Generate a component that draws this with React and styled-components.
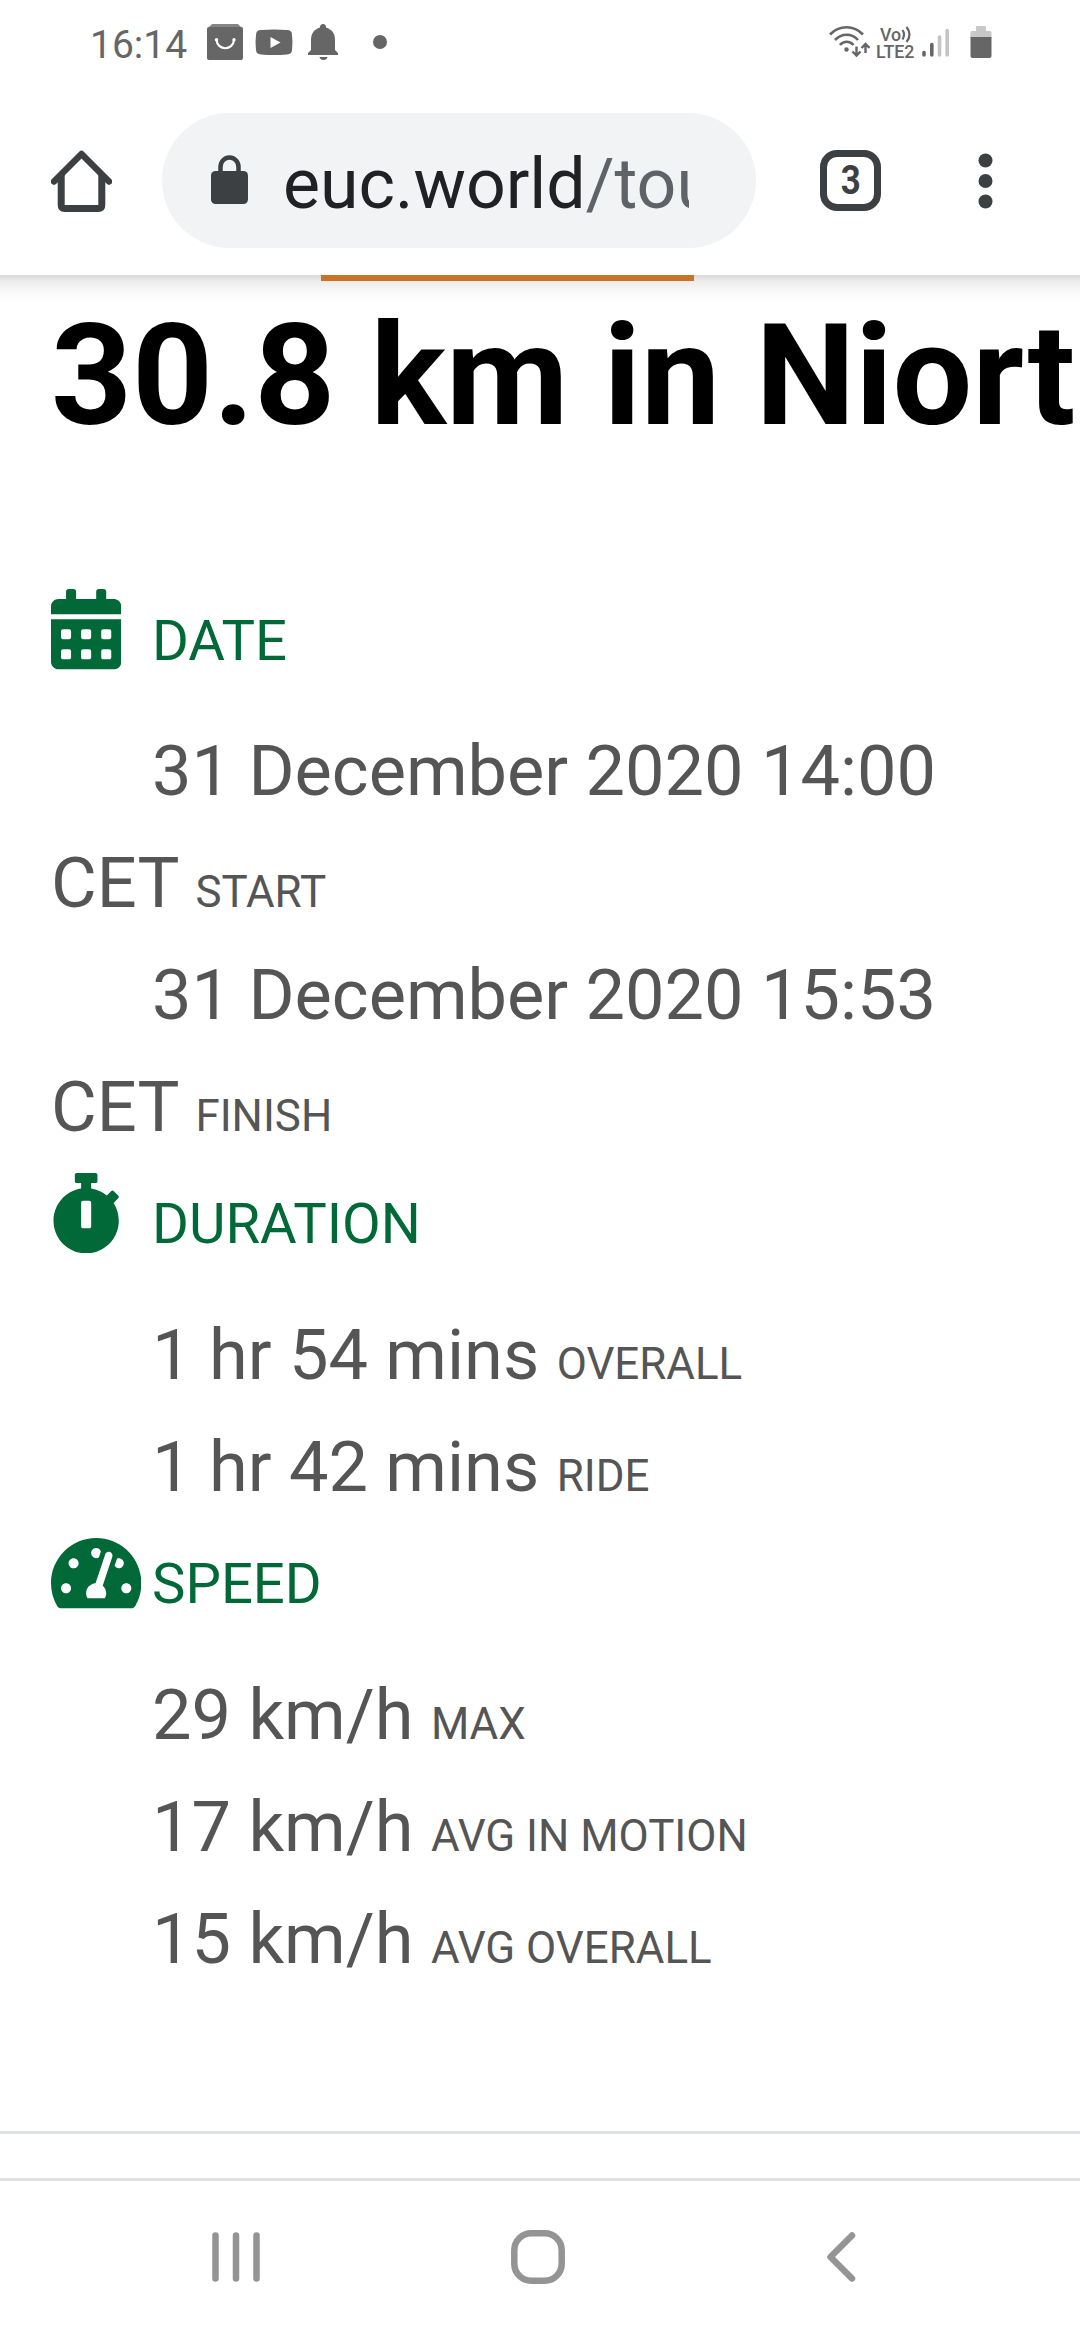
import React from 'react'
import styled, { createGlobalStyle } from 'styled-components'
import { FaCalendarAlt, FaStopwatch, FaTachometerAlt } from 'react-icons/fa'

const GlobalStyle = createGlobalStyle`
  * {
    box-sizing: border-box;
  }

  body {
    margin: 0;
    background: #fff;
    font-family: Roboto, "Liberation Sans", sans-serif;
  }
`

const Screen = styled.div`
  display: flex;
  flex-direction: column;
  width: 1080px;
  height: 2340px;
  overflow: hidden;
  background: #fff;
`

/* status bar */

const StatusBar = styled.div`
  display: flex;
  justify-content: space-between;
  flex: none;
  height: 84px;
  padding: 0 88px 0 90px;
  color: #666;
`

const StatusGroup = styled.div`
  display: flex;
  align-items: center;
`

const Clock = styled.span`
  width: 117px;
  padding-top: 6px;
  font-size: 39px;
  line-height: 44px;
`

const Network = styled.div`
  display: flex;
  flex-direction: column;
  width: 43px;
  margin: 2px 3px 0 6px;
  font-size: 17.8px;
  font-weight: 500;
  line-height: 17px;
`

const NetworkTop = styled.div`
  display: flex;
  padding-left: 4px;
`

/* browser toolbar */

const Toolbar = styled.div`
  display: flex;
  align-items: center;
  flex: none;
  position: relative;
  z-index: 1;
  height: 191px;
  padding: 2px 0 0 51px;
  background: #fff;
`

const ToolbarShadow = styled.div`
  position: absolute;
  top: 191px;
  left: 0;
  width: 1080px;
  height: 26px;
  background: linear-gradient(#d9d9d9, #ececec 25%, #f8f8f8 60%, rgba(255, 255, 255, 0));
`

const LoadingBar = styled.div`
  position: absolute;
  top: 191px;
  left: 321px;
  width: 373px;
  height: 6px;
  background: #c87428;
`

const AddressBar = styled.div`
  display: flex;
  align-items: center;
  width: 594px;
  height: 135px;
  margin: 0 64px 0 50px;
  padding-left: 49px;
  border-radius: 68px;
  background: #f1f3f4;

  svg {
    margin-bottom: 3px;
  }
`

const Url = styled.div`
  width: 406px;
  margin-left: 35px;
  padding-top: 6px;
  overflow: hidden;
  font-size: 69.8px;
  line-height: 90px;
  color: #202124;
  white-space: nowrap;
`

const UrlPath = styled.span`
  color: #5f6368;
`

const TabCount = styled.div`
  display: flex;
  align-items: center;
  justify-content: center;
  width: 61px;
  height: 61px;
  border: 7px solid #3c4043;
  border-radius: 17px;
  font-size: 41px;
  font-weight: 700;
  line-height: 47px;
  color: #3c4043;
`

const TabNumber = styled.span`
  transform: scaleX(0.85);
`

const MenuDots = styled.svg`
  margin-left: 97px;
`

/* page */

const Page = styled.main`
  flex: 1;
  overflow: hidden;
`

const Title = styled.h1`
  margin: 0;
  padding: 17px 0 0 51px;
  font-size: 141.4px;
  font-weight: 700;
  line-height: 169px;
  color: #000;
  white-space: nowrap;
`

const Details = styled.div`
  height: 1551.3px;
  margin-top: 118.7px;
  padding: 0 51px;
`

const SectionHead = styled.h2`
  display: flex;
  align-items: baseline;
  height: 112px;
  margin: 0 0 23.65px;
  font-size: 56.25px;
  font-weight: 400;
  line-height: 122px;
  color: #006937;
`

const IconSlot = styled.span`
  width: 101px;
  flex: none;

  svg {
    width: ${({$iconWidth}) => $iconWidth}px;
    height: 80.4px;
    vertical-align: -10px;
  }
`

const Entry = styled.p`
  margin: 0;
  font-size: 70.3px;
  line-height: 112px;
  text-indent: 101px;
  color: #555;
`

const Caption = styled.small`
  font-size: 43.9px;
  line-height: 1;
`

const Divider = styled.hr`
  height: 3px;
  margin: 0;
  border: 0;
  background: #dee2e6;
`

/* android navigation */

const NavBar = styled.nav`
  display: flex;
  align-items: center;
  flex: none;
  height: 162px;
  padding: 0 0 7px 212px;
  border-top: 3px solid #e0e0e0;
  background: #fff;
`

const NavIcon = styled.svg`
  flex: none;
  margin-right: ${({$gap}) => $gap || 0}px;
  fill: none;
  stroke: #949494;
  stroke-width: 6.5;
  stroke-linecap: round;
`

const sections = [
  {
    name: "DATE",
    icon: <FaCalendarAlt />,
    iconWidth: 70.3,
    entries: [
      ["31 December 2020 14:00 CET", "START"],
      ["31 December 2020 15:53 CET", "FINISH"],
    ],
  },
  {
    name: "DURATION",
    icon: <FaStopwatch />,
    iconWidth: 70.3,
    entries: [
      ["1 hr 54 mins", "OVERALL"],
      ["1 hr 42 mins", "RIDE"],
    ],
  },
  {
    name: "SPEED",
    icon: <FaTachometerAlt />,
    iconWidth: 90.4,
    entries: [
      ["29 km/h", "MAX"],
      ["17 km/h", "AVG IN MOTION"],
      ["15 km/h", "AVG OVERALL"],
    ],
  },
]

const NotificationIcons = () => (
  <svg width="184" height="40" viewBox="0 0 184 40" fill="#666">
    <path d="M5 2h26l4 4H1z" opacity="0.8" />
    <rect y="5" width="36" height="33" rx="2" />
    <path d="M9.500 18c1 11 16.500 11 17.500 0" fill="none" stroke="#fff" strokeWidth="2.200" />
    <circle cx="9.500" cy="17.800" r="1.700" fill="#fff" />
    <circle cx="27" cy="17.800" r="1.700" fill="#fff" />
    <path d="M54 8q13-1 26 0q5 0 5 5q1 7 0 15q0 4-5 4.500q-13 1-26 0q-5-.5-5-4.500q-1-8 0-15q0-5 5-5z" />
    <path d="M63.500 15v11l10-5.500z" fill="#fff" />
    <path d="M116 2a3 3 0 0 1 3 3.500c6 2 9 6 9 12.500v10l3 3v2h-30v-2l3-3V18c0-6.500 3-10.500 9-12.500a3 3 0 0 1 3-3.500z" />
    <path d="M112.500 35h8q-.5 3-4 3t-4-3z" />
    <circle cx="173" cy="20" r="7" />
  </svg>
)

const WifiIcon = () => (
  <svg width="41" height="34" viewBox="0 0 41 34" fill="none" stroke="#666" strokeWidth="2.600">
    <path d="M1 9.500C10-.2 25-.2 34 9.500M6 15c6.500-7 17-7 23 0M11 20c3.500-4.300 10-4.300 13.500 0" />
    <circle cx="17.500" cy="24.500" r="2.200" fill="#666" stroke="none" />
    <path d="M27.500 21.500v9M23.500 26.500l4 4 4-4M36.500 28v-9M32.500 23l4-4 4 4" strokeWidth="2.400" />
  </svg>
)

const VoiceWaves = () => (
  <svg width="12" height="17" viewBox="0 0 12 17" fill="none" stroke="#666" strokeWidth="2.200">
    <path d="M1.500 4q3 4.500 0 9.500M5.500 1q6 7.300 0 15" />
  </svg>
)

const SignalIcon = () => (
  <svg width="28" height="32" viewBox="0 0 28 32" strokeWidth="3.600" strokeLinecap="round">
    <path d="M2 26.500v2.500M9.800 18.500v10.500" stroke="#666" />
    <path d="M17.500 11v18M25.200 4.500v24.500" stroke="#c4c4c4" />
  </svg>
)

const Battery = styled.svg`
  margin-left: 20px;
`

const BatteryIcon = () => (
  <Battery width="22" height="32" viewBox="0 0 22 32">
    <path d="M6 1q0-1 1-1h8q1 0 1 1v4h4q1.500 0 1.500 1.500V12h-21V6.500Q.5 5 2 5h4z" fill="#c8c8c8" />
    <path d="M.5 11h21v19q0 2-2 2h-17q-2 0-2-2z" fill="#666" />
  </Battery>
)

const HomeIcon = () => (
  <svg width="61" height="62" viewBox="0 0 61 62" fill="none" stroke="#3c4043" strokeWidth="7">
    <path d="M3 31.500L30.500 4 58 31.500" strokeLinecap="round" strokeLinejoin="round" strokeWidth="6.500" />
    <path d="M10.200 25v30q0 3.500 3.500 3.500h33.600q3.500 0 3.500-3.500V25" />
  </svg>
)

const LockIcon = () => (
  <svg width="37" height="49" viewBox="0 0 37 49">
    <rect y="16" width="37" height="33" rx="4.500" fill="#3c4043" />
    <path d="M9.500 18v-6a9 9.500 0 0 1 18 0v6" fill="none" stroke="#3c4043" strokeWidth="4.500" />
  </svg>
)

const Section = ({name, icon, iconWidth, entries}) => {
  return (
    <section>
      <SectionHead>
        <IconSlot $iconWidth={iconWidth}>{icon}</IconSlot>
        {name}
      </SectionHead>
      {entries.map(([value, caption]) => (
        <Entry key={caption}>{value} <Caption>{caption}</Caption></Entry>
      ))}
    </section>
  )
}

const App = () => {
  return (
    <>
      <GlobalStyle />
      <Screen>
        <StatusBar>
          <StatusGroup>
            <Clock>16:14</Clock>
            <NotificationIcons />
          </StatusGroup>
          <StatusGroup>
            <WifiIcon />
            <Network>
              <NetworkTop>Vo<VoiceWaves /></NetworkTop>
              LTE2
            </Network>
            <SignalIcon />
            <BatteryIcon />
          </StatusGroup>
        </StatusBar>

        <Toolbar>
          <HomeIcon />
          <AddressBar>
            <LockIcon />
            <Url>euc.world<UrlPath>/tour</UrlPath></Url>
          </AddressBar>
          <TabCount><TabNumber>3</TabNumber></TabCount>
          <MenuDots width="15" height="56" viewBox="0 0 15 56" fill="#3c4043">
            <circle cx="7.500" cy="7.500" r="7" />
            <circle cx="7.500" cy="28" r="7" />
            <circle cx="7.500" cy="48.500" r="7" />
          </MenuDots>
          <ToolbarShadow />
          <LoadingBar />
        </Toolbar>

        <Page>
          <Title>30.8 km in Niort</Title>
          <Details>
            {sections.map((section) => (
              <Section key={section.name} {...section} />
            ))}
          </Details>
          <Divider />
        </Page>

        <NavBar>
          <NavIcon width="48" height="50" viewBox="0 0 48 50" $gap={251}>
            <path d="M3.500 3.500v43M24 3.500v43M44.500 3.500v43" />
          </NavIcon>
          <NavIcon width="54" height="54" viewBox="0 0 54 54" $gap={261}>
            <rect x="3.300" y="3.300" width="47.400" height="47.400" rx="17" />
          </NavIcon>
          <NavIcon width="30" height="50" viewBox="0 0 30 50">
            <path d="M26 3.500L4.500 25 26 46.500" strokeLinejoin="round" />
          </NavIcon>
        </NavBar>
      </Screen>
    </>
  )
}

export default App
